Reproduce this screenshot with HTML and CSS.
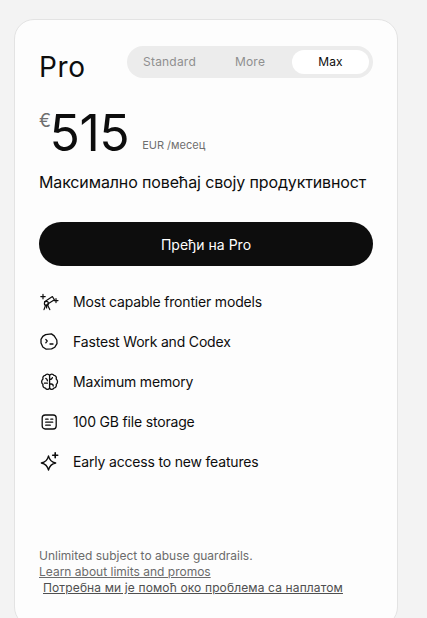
FILE: index.html
```html
<!DOCTYPE html>
<html lang="sr">
<head>
  <meta charset="UTF-8" />
  <meta name="viewport" content="width=device-width, initial-scale=1.0" />
  <title>Pro</title>
  <link rel="stylesheet" href="styles.css">
</head>
<body>
  <div class="card">
    <div class="header">
      <h2 class="plan">Pro</h2>
      <div class="tabs">
        <div class="tab">Standard</div>
        <div class="tab">More</div>
        <div class="tab active">Max</div>
      </div>
    </div>
    <div class="price">
      <span class="currency">€</span>
      <span class="amount">515</span>
      <span class="period">EUR /месец</span>
    </div>
    <p class="tagline">Максимално повећај своју продуктивност</p>
    <button class="btn" type="button">Пређи на Pro</button>
    <ul class="features">
      <li>
        <svg class="icon" viewBox="0 0 20 20" fill="none" stroke="currentColor" stroke-width="1.2" stroke-linecap="round" stroke-linejoin="round">
          <path d="M5.6 9.8l7.8-5.2 2 3.2-7.4 4.6"/>
          <circle cx="7.4" cy="11.4" r="2"/>
          <path d="M6.6 13.2l-1.6 4.4M8.6 13.2l2.2 4.4M7.6 13.4v2.6"/>
          <path d="M4 2.4v4.4M1.8 4.6h4.4M17 6.6v4M15 8.6h4"/>
        </svg>
        <span>Most capable frontier models</span>
      </li>
      <li>
        <svg class="icon" viewBox="0 0 20 20" fill="none" stroke="currentColor" stroke-width="1.3" stroke-linecap="round" stroke-linejoin="round">
          <path d="M6.6 2.6L12.4 1.9 15.2 3.9 17.8 8 18 11.6 15.8 15.2 12.6 16.9 7.2 17.2 3.8 15 2 11V7.4L3.8 4.4z"/>
          <path d="M6.8 7.4l1.4 1.6-1.4 1.8M11 12h3"/>
        </svg>
        <span>Fastest Work and Codex</span>
      </li>
      <li>
        <svg class="icon" viewBox="0 0 20 20" fill="none" stroke="currentColor" stroke-width="1.3" stroke-linecap="round" stroke-linejoin="round">
          <path d="M10.6 3.4C9.6 1.8 7.2 1.8 6.2 3.4 4.4 3.6 3.4 5.4 4 7 2.2 8.4 2.2 11 4 12.4 3.4 14.2 4.6 16 6.4 16.2 7.4 17.8 9.6 17.8 10.6 16.2 11.6 17.8 13.8 17.8 14.8 16.2 16.6 16 17.8 14.2 17.2 12.4 19 11 19 8.4 17.2 7 17.8 5.4 16.8 3.6 15 3.4 14 1.8 11.6 1.8 10.6 3.4z"/>
          <path d="M10.6 3.4V16.2M10.6 7.6c1.4 0 2.4-.7 2.8-1.9M10.6 12h1.6c1.2 0 2 .8 2 2M6.8 6.4c1 .4 1.6 1.2 1.6 2.4M5.4 11.2h3"/>
        </svg>
        <span>Maximum memory</span>
      </li>
      <li>
        <svg class="icon" viewBox="0 0 20 20" fill="none" stroke="currentColor" stroke-width="1.3" stroke-linecap="round" stroke-linejoin="round">
          <rect x="3.2" y="3" width="14" height="14" rx="3"/>
          <path d="M6.7 7.2h2.4M11.8 7.2h2M6.7 10.2h7M6.7 13.2h4.6"/>
        </svg>
        <span>100 GB file storage</span>
      </li>
      <li>
        <svg class="icon" viewBox="0 0 20 20" fill="none" stroke="currentColor" stroke-width="1.3" stroke-linecap="round" stroke-linejoin="round">
          <path d="M9.5 3.8c.9 4.2 2.9 6.3 7.2 7.2-4.3.9-6.3 3-7.2 7.2-.9-4.2-2.9-6.3-7.2-7.2 4.3-.9 6.3-3 7.2-7.2z"/>
          <path d="M16.2 .8v5M13.7 3.3h5" stroke-width="1.6"/>
        </svg>
        <span>Early access to new features</span>
      </li>
    </ul>
    <div class="footer">
      <p>Unlimited subject to abuse guardrails.</p>
      <p><a href="#">Learn about limits and promos</a></p>
      <p class="help"><a href="#">Потребна ми је помоћ око проблема са наплатом</a></p>
    </div>
  </div>
</body>
</html>
```

FILE: styles.css
```css
* {
  margin: 0;
  padding: 0;
  box-sizing: border-box;
  font-family: Inter, 'Noto Sans', sans-serif;
}
body {
  background-color: #f3f3f3;
  height: 618px;
  overflow: hidden;
  padding: 19px 29px 0 14px;
  color: #0d0d0d;
}

.card {
  background-color: #fdfdfd;
  border: 1px solid #e3e3e3;
  border-radius: 20px;
  height: 608px;
  padding: 26px 24px 0;
  display: flex;
  flex-direction: column;
}

.header {
  display: flex;
  justify-content: space-between;
  align-items: flex-start;
}

.plan {
  font-size: 28px;
  font-weight: 400;
  line-height: 42px;
  letter-spacing: 0.7px;
}

.tabs {
  display: flex;
  gap: 3.5px;
  width: 246px;
  height: 32px;
  padding: 4px;
  border-radius: 16px;
  background-color: #ececec;
}

.tab {
  flex: 1;
  display: flex;
  align-items: center;
  justify-content: center;
  padding-bottom: 1px;
  font-size: 12px;
  letter-spacing: 0.2px;
  color: #8f8f8f;
  border-radius: 12px;
}

.tab.active {
  background-color: #ffffff;
  color: #0d0d0d;
}

.price {
  display: flex;
  align-items: flex-start;
  margin-top: 18px;
  height: 56px;
}

.currency {
  font-size: 18px;
  line-height: 24px;
  margin-top: 3px;
  letter-spacing: -1.5px;
  color: #6f6f6f;
}

.amount {
  font-size: 50px;
  line-height: 56px;
  letter-spacing: -0.5px;
  margin-top: -1px;
}

.period {
  font-size: 11px;
  line-height: 16px;
  margin: 31px 0 0 13px;
  color: #6f6f6f;
}

.tagline {
  margin-top: 8px;
  font-size: 16px;
  line-height: 24px;
  letter-spacing: -0.13px;
}

.btn {
  margin-top: 28px;
  height: 44px;
  border: none;
  border-radius: 22px;
  background-color: #0d0d0d;
  color: #ffffff;
  font-size: 14px;
}

.features {
  list-style: none;
  margin-top: 16px;
}

.features li {
  display: flex;
  align-items: center;
  gap: 14px;
  height: 40px;
  font-size: 14px;
  letter-spacing: -0.18px;
}

.features span {
  padding-bottom: 2px;
}

.icon {
  width: 20px;
  height: 20px;
  flex-shrink: 0;
}

.footer {
  margin-top: 66px;
  font-size: 12px;
  line-height: 16px;
  color: #6b6b6b;
}

.footer a {
  color: inherit;
}

.footer .help {
  padding-left: 4px;
  letter-spacing: 0.13px;
  color: #4f4f4f;
}
```
